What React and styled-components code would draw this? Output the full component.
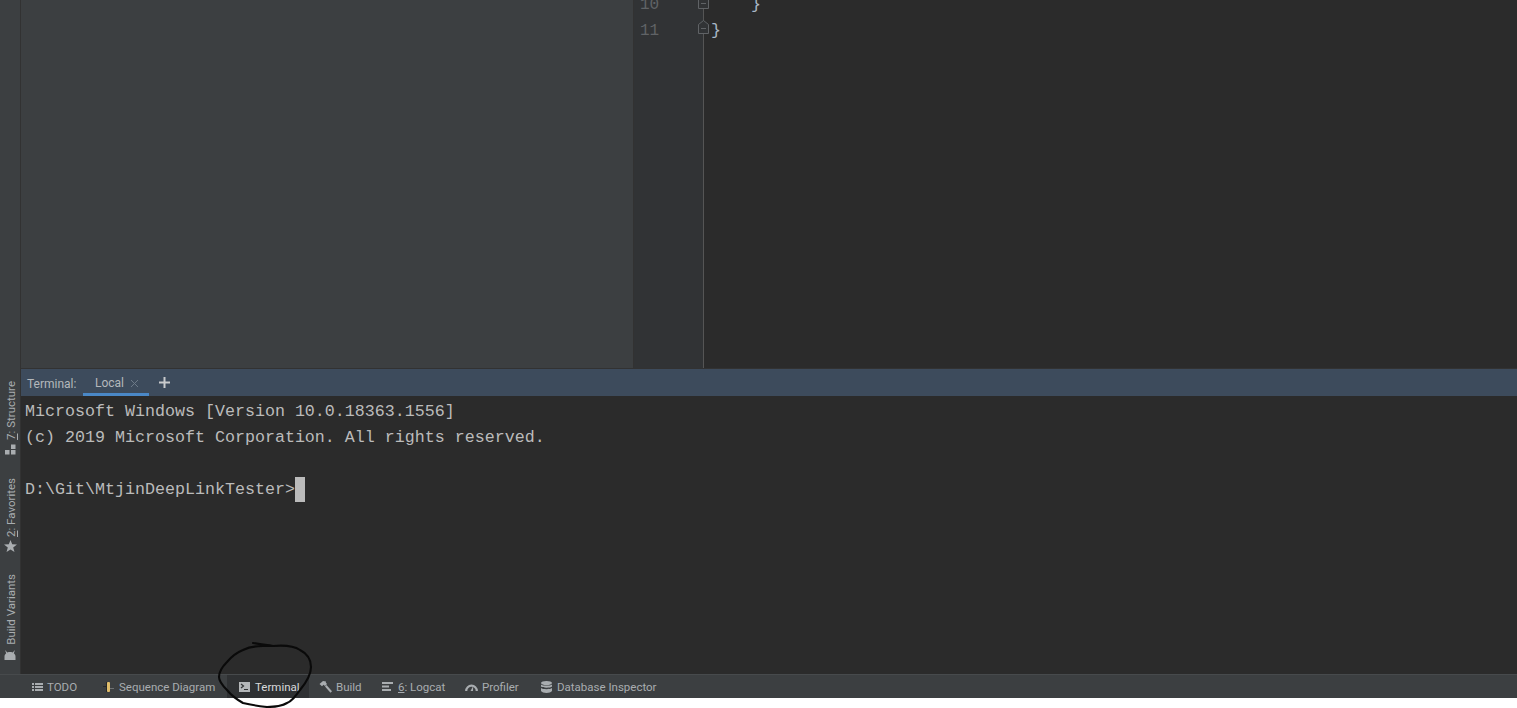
import React from 'react';
import styled, { createGlobalStyle } from 'styled-components';

const GlobalStyle = createGlobalStyle`
  html, body {
    margin: 0;
    padding: 0;
    background: #ffffff;
    overflow: hidden;
  }
`;

const Page = styled.div`
  position: relative;
  width: 1517px;
  height: 708px;
  display: flex;
  flex-direction: column;
  font-family: Roboto, "Noto Sans", sans-serif;
  overflow: hidden;
`;

const Workspace = styled.div`
  height: 674px;
  display: flex;
`;

const SideRail = styled.div`
  width: 20px;
  background: #3c3f41;
  border-right: 1px solid #323232;
  display: flex;
  flex-direction: column;
  justify-content: flex-end;
  align-items: center;
  padding-bottom: 14px;
  box-sizing: content-box;
  height: 660px;
`;

const RailItem = styled.div`
  display: flex;
  flex-direction: column;
  align-items: center;
  gap: ${props => props.$gap || 5}px;
  margin-bottom: ${props => props.$after || 0}px;
  color: #a9adb0;
`;

const RailLabel = styled.span`
  writing-mode: vertical-rl;
  transform: rotate(180deg);
  font-size: 11.5px;
  line-height: 14px;
  padding-right: 2px;
  white-space: nowrap;
`;

const Main = styled.div`
  flex: 1;
  display: flex;
  flex-direction: column;
  min-width: 0;
`;

const TopArea = styled.div`
  height: 368px;
  display: flex;
  overflow: hidden;
`;

const ProjectPane = styled.div`
  width: 612px;
  background: #3c3f41;
  border-right: 1px solid #323232;
`;

const Gutter = styled.div`
  position: relative;
  width: 70px;
  background: #313335;
  box-sizing: border-box;
  border-right: 1px solid #555555;
  font-family: "Liberation Mono", monospace;
  font-size: 16px;
  line-height: 26px;
  color: #606366;
`;

const LineNumbers = styled.div`
  margin-top: -8px;
  padding-left: 6px;
`;

const FoldMark = styled.svg`
  position: absolute;
  left: 64px;
  top: ${props => props.$top}px;
`;

const CodePane = styled.div`
  flex: 1;
  background: #2b2b2b;
  font-family: "Liberation Mono", monospace;
  font-size: 16.67px;
  line-height: 26px;
  color: #a9b7c6;
  padding-left: 7px;
`;

const CodeLines = styled.div`
  margin-top: -8px;
  white-space: pre;
`;

const TerminalPanel = styled.div`
  height: 306px;
  display: flex;
  flex-direction: column;
  background: #2b2b2b;
  border-top: 1px solid #323232;
  box-sizing: border-box;
`;

const TabBar = styled.div`
  height: 27px;
  flex-shrink: 0;
  background: #3d4b5c;
  display: flex;
  align-items: stretch;
  padding-left: 6px;
  font-size: 12px;
  color: #b4b8bb;
`;

const TabCaption = styled.span`
  width: 56px;
  line-height: 30px;
`;

const Tab = styled.div`
  width: 66px;
  box-sizing: border-box;
  display: flex;
  align-items: center;
  padding-left: 12px;
  gap: 6px;
  border-bottom: 3px solid #4a88c7;
  padding-top: 4px;
`;

const AddTab = styled.div`
  margin-left: 10px;
  display: flex;
  align-items: center;
  padding-bottom: 1px;
  color: #c4c7c9;
`;

const TerminalBody = styled.div`
  flex: 1;
  padding: 3px 0 0 4px;
  font-family: "Liberation Mono", monospace;
  font-size: 16.67px;
  line-height: 26px;
  color: #bbbbbb;
  white-space: pre;
`;

const Cursor = styled.span`
  display: inline-block;
  width: 10px;
  height: 25px;
  background: #bbbbbb;
  vertical-align: top;
`;

const BottomBar = styled.div`
  height: 24px;
  background: #3c3f41;
  border-top: 1px solid #474a4c;
  box-sizing: border-box;
  display: flex;
  align-items: stretch;
  padding-left: 20px;
  font-size: 11.5px;
  color: #a9adb0;
`;

const BarItem = styled.div`
  width: ${props => props.$width}px;
  box-sizing: border-box;
  flex-shrink: 0;
  display: flex;
  align-items: center;
  gap: ${props => props.$gap || 4}px;
  padding-left: ${props => props.$pad || 0}px;
  white-space: nowrap;
  background: ${props => (props.$active ? '#2f3133' : 'transparent')};
  color: ${props => (props.$active ? '#d8dadb' : 'inherit')};
`;

const Mnemonic = styled.span`
  text-decoration: underline;
`;

const Scribble = styled.svg`
  position: absolute;
  left: 210px;
  top: 636px;
  pointer-events: none;
`;

const TodoIcon = () => (
  <svg width="11" height="10" viewBox="0 0 11 10" fill="#a9adb0">
    <rect x="0" y="1" width="2" height="2" />
    <rect x="3" y="1" width="8" height="2" />
    <rect x="0" y="4" width="2" height="2" />
    <rect x="3" y="4" width="8" height="2" />
    <rect x="0" y="7" width="2" height="2" />
    <rect x="3" y="7" width="8" height="2" />
  </svg>
);

const SequenceIcon = () => (
  <svg width="11" height="12" viewBox="0 0 11 12">
    <rect x="0" y="5" width="4" height="1" fill="#26282a" />
    <rect x="7" y="7" width="4" height="1" fill="#6e7173" />
    <rect x="3" y="1" width="1" height="10" fill="#26282a" />
    <rect x="4" y="1" width="3" height="10" rx="1" fill="#e0bd6a" />
  </svg>
);

const TerminalIcon = () => (
  <svg width="11" height="10" viewBox="0 0 11 10">
    <rect width="11" height="10" fill="#b4b7b9" />
    <path d="M2 2 L4.5 4 L2 6" fill="none" stroke="#2f3133" strokeWidth="1.2" />
    <rect x="5" y="7" width="4" height="1" fill="#2f3133" />
  </svg>
);

const HammerIcon = () => (
  <svg width="13" height="12" viewBox="0 0 13 12" fill="#a9adb0">
    <path d="M0.5 3 L4 0 L7 0.5 L6.8 1.6 L8 3 L6 5 L4.5 3.8 L3 5.2 Z" />
    <path d="M6 5.5 L7.5 4 L13 10.2 L11.5 11.8 Z" />
  </svg>
);

const LogcatIcon = () => (
  <svg width="11" height="9" viewBox="0 0 11 9" fill="#a9adb0">
    <rect x="0" y="0" width="11" height="2" />
    <rect x="0" y="3.5" width="7" height="2" />
    <rect x="0" y="7" width="9" height="2" />
  </svg>
);

const GaugeIcon = () => (
  <svg width="13" height="8" viewBox="0 0 13 8">
    <path d="M1.2 8 A5.3 5.3 0 0 1 11.8 8" fill="none" stroke="#a9adb0" strokeWidth="2.2" />
    <path d="M5.5 8 L8.2 3 L8 8 Z" fill="#a9adb0" />
  </svg>
);

const DatabaseIcon = () => (
  <svg width="11" height="12" viewBox="0 0 11 12" fill="#a9adb0">
    <ellipse cx="5.5" cy="2" rx="5.5" ry="2" />
    <path d="M0 3.4 C1.5 5 9.5 5 11 3.4 V5.6 C9.5 7.2 1.5 7.2 0 5.6 Z" />
    <path d="M0 7 C1.5 8.6 9.5 8.6 11 7 V10 C9.5 12.6 1.5 12.6 0 10 Z" />
  </svg>
);

const StructureIcon = () => (
  <svg width="11" height="11" viewBox="0 0 11 11" fill="#a9adb0">
    <rect x="0" y="6" width="4.5" height="4.5" />
    <rect x="6" y="6" width="4.5" height="4.5" />
    <rect x="6" y="0.5" width="4.5" height="4.5" />
  </svg>
);

const StarIcon = () => (
  <svg width="13" height="12" viewBox="0 0 13 12" fill="#a9adb0">
    <path d="M6.5 0 L8.2 4.2 L13 4.5 L9.2 7.4 L10.5 12 L6.5 9.4 L2.5 12 L3.8 7.4 L0 4.5 L4.8 4.2 Z" />
  </svg>
);

const AndroidIcon = () => (
  <svg width="12" height="10" viewBox="0 0 12 10" fill="#a9adb0">
    <path d="M1 0 L3.4 2.4 C5 1.8 7 1.8 8.6 2.4 L11 0 L9.8 3.2 C10.8 4 11.5 5.2 11.5 6.5 V10 H0.5 V6.5 C0.5 5.2 1.2 4 2.2 3.2 Z" />
  </svg>
);

const CloseIcon = () => (
  <svg width="9" height="9" viewBox="0 0 9 9" stroke="#6d7a88" strokeWidth="1" fill="none">
    <path d="M1 1 L8 8 M8 1 L1 8" />
  </svg>
);

const PlusIcon = () => (
  <svg width="11" height="11" viewBox="0 0 11 11" fill="#c8cacc">
    <rect x="0" y="4.5" width="11" height="2" />
    <rect x="4.5" y="0" width="2" height="11" />
  </svg>
);

const Fold = ({ top, closed }) => (
  <FoldMark $top={top} width="11" height="14" viewBox="0 0 11 14" fill="#313335" stroke="#606366">
    <path d={closed ? 'M0.5 4.5 L5.5 0.5 L10.5 4.5 V13.5 H0.5 Z' : 'M0.5 0.5 H10.5 V13.5 H0.5 Z'} />
    <path d="M3 8.5 H8" />
  </FoldMark>
);

const App = () => (
  <Page>
    <GlobalStyle />
    <Workspace>
      <SideRail>
        <RailItem $gap={4} $after={23}>
          <RailLabel>
            <Mnemonic>7</Mnemonic>: Structure
          </RailLabel>
          <StructureIcon />
        </RailItem>
        <RailItem $gap={3} $after={22}>
          <RailLabel>
            <Mnemonic>2</Mnemonic>: Favorites
          </RailLabel>
          <StarIcon />
        </RailItem>
        <RailItem $gap={5}>
          <RailLabel>Build Variants</RailLabel>
          <AndroidIcon />
        </RailItem>
      </SideRail>
      <Main>
        <TopArea>
          <ProjectPane />
          <Gutter>
            <LineNumbers>
              10
              <br />
              11
            </LineNumbers>
            <Fold top={-5} />
            <Fold top={20} closed />
          </Gutter>
          <CodePane>
            <CodeLines>
              {'    }\n}'}
            </CodeLines>
          </CodePane>
        </TopArea>
        <TerminalPanel>
          <TabBar>
            <TabCaption>Terminal:</TabCaption>
            <Tab>
              Local
              <CloseIcon />
            </Tab>
            <AddTab>
              <PlusIcon />
            </AddTab>
          </TabBar>
          <TerminalBody>
            {'Microsoft Windows [Version 10.0.18363.1556]\n(c) 2019 Microsoft Corporation. All rights reserved.\n\nD:\\Git\\MtjinDeepLinkTester>'}
            <Cursor />
          </TerminalBody>
        </TerminalPanel>
      </Main>
    </Workspace>
    <BottomBar>
      <BarItem $width={71} $pad={12}>
        <TodoIcon /> TODO
      </BarItem>
      <BarItem $width={136} $pad={12} $gap={5}>
        <SequenceIcon /> Sequence Diagram
      </BarItem>
      <BarItem $width={82} $pad={12} $gap={5} $active>
        <TerminalIcon /> Terminal
      </BarItem>
      <BarItem $width={73} $pad={10}>
        <HammerIcon /> Build
      </BarItem>
      <BarItem $width={83} $gap={5}>
        <LogcatIcon />
        <span>
          <Mnemonic>6</Mnemonic>: Logcat
        </span>
      </BarItem>
      <BarItem $width={76}>
        <GaugeIcon /> Profiler
      </BarItem>
      <BarItem $width={130} $gap={5}>
        <DatabaseIcon /> Database Inspector
      </BarItem>
    </BottomBar>
    <Scribble width="110" height="72" viewBox="0 0 110 72" fill="none" stroke="#0a0a0a" strokeWidth="2.1" strokeLinecap="round" strokeLinejoin="round">
      <path d="M43 7 C50 8 57 9 63 10 C74 9 84 10 90 14 C98 18 101 24 101 31 C101 40 95 48 90 54 C85 61 82 65 77 67 C70 71 63 71 57 71 C48 70 41 69 33 67 C26 63 21 59 17 54 C12 49 9 45 9 41 C9 35 13 30 17 26 C22 20 28 16 33 14 C39 11 46 10 53 10 L63 10" />
    </Scribble>
  </Page>
);

export default App;
